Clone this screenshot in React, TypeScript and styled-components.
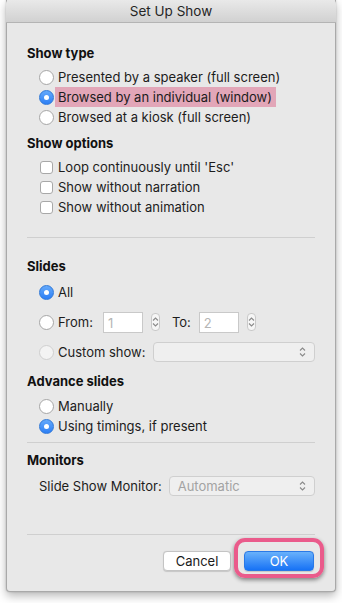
import React from 'react'
import styled, { createGlobalStyle } from 'styled-components'

const Global = createGlobalStyle`
  html, body {
    margin: 0;
    padding: 0;
    background: #ffffff;
  }
  body {
    font-family: Inter, "Liberation Sans", Arial, sans-serif;
    font-size: 13px;
    color: #1a1a1a;
  }
`

function Chevrons({ color = '#6e6e6e' }: { color?: string }) {
  return (
    <svg width="7" height="12" viewBox="0 0 7 12">
      <path d="M1 4.5 L3.5 2 L6 4.5" fill="none" stroke={color} strokeWidth="1.1" />
      <path d="M1 7.5 L3.5 10 L6 7.5" fill="none" stroke={color} strokeWidth="1.1" />
    </svg>
  )
}

function Radio({ on, disabled }: { on?: boolean; disabled?: boolean }) {
  return (
    <RadioDot $on={on} $disabled={disabled}>
      {on && <Pip />}
    </RadioDot>
  )
}

export default function App() {
  return (
    <Page>
      <Global />
      <Window>
        <TitleBar>Set Up Show</TitleBar>
        <Body>
          <Heading>Show type</Heading>
          <Group $gap={6}>
            <Row>
              <Radio />
              <Label>Presented by a speaker (full screen)</Label>
            </Row>
            <Row>
              <Radio on />
              <Label $highlight>Browsed by an individual (window)</Label>
            </Row>
            <Row>
              <Radio />
              <Label>Browsed at a kiosk (full screen)</Label>
            </Row>
          </Group>

          <Heading $top={8}>Show options</Heading>
          <Group $gap={6}>
            <Row>
              <Check />
              <Label>Loop continuously until 'Esc'</Label>
            </Row>
            <Row>
              <Check />
              <Label>Show without narration</Label>
            </Row>
            <Row>
              <Check />
              <Label>Show without animation</Label>
            </Row>
          </Group>

          <Rule $top={20} />

          <Heading $top={20}>Slides</Heading>
          <Group $gap={3}>
            <TallRow>
              <Radio on />
              <Label>All</Label>
            </TallRow>
            <TallRow>
              <Radio />
              <Label>From:</Label>
              <Field $left={10}>1</Field>
              <Stepper $left={8}>
                <Chevrons color="#8a8a8a" />
              </Stepper>
              <Label $left={12}>To:</Label>
              <Field $left={8}>2</Field>
              <Stepper $left={8}>
                <Chevrons color="#8a8a8a" />
              </Stepper>
            </TallRow>
            <TallRow>
              <Radio disabled />
              <Label>Custom show:</Label>
              <Popup $left={7} />
            </TallRow>
          </Group>

          <Heading $top={6}>Advance slides</Heading>
          <Group $gap={7}>
            <Row>
              <Radio />
              <Label>Manually</Label>
            </Row>
            <Row>
              <Radio on />
              <Label>Using timings, if present</Label>
            </Row>
          </Group>

          <Rule $top={6} />

          <Heading $top={9}>Monitors</Heading>
          <Group $gap={8}>
            <Row $indent={0}>
              <Label $plain>Slide Show Monitor:</Label>
              <Popup $left={7}>Automatic</Popup>
            </Row>
          </Group>

          <Rule $top={38} />

          <Buttons>
            <Button>Cancel</Button>
            <Focus>
              <Button $primary>OK</Button>
            </Focus>
          </Buttons>
        </Body>
      </Window>
    </Page>
  )
}

const Page = styled.div`
  width: 342px;
  height: 603px;
  padding-left: 6px;
  box-sizing: border-box;
`

const Window = styled.div`
  width: 330px;
  height: 592px;
  background: #e8e8e8;
  border: 1px solid #a9a9a9;
  border-top: none;
  border-radius: 0 0 4px 4px;
  box-sizing: border-box;
  box-shadow: 0 4px 10px rgba(0, 0, 0, 0.28), 0 0 2px rgba(0, 0, 0, 0.2);
  display: flex;
  flex-direction: column;
`

const TitleBar = styled.div`
  height: 22px;
  line-height: 22px;
  text-align: center;
  font-size: 13.5px;
  color: #262626;
  background: linear-gradient(#e9e9e9, #d1d1d1);
  border-bottom: 1px solid #b4b4b4;
  border-radius: 4px 4px 0 0;
  margin: 0 -1px;
`

const Body = styled.div`
  padding: 22px 20px 0 20px;
  display: flex;
  flex-direction: column;
`

const Heading = styled.div<{ $top?: number }>`
  font-weight: 700;
  font-size: 13px;
  line-height: 16px;
  color: #111;
  margin-top: ${p => p.$top ?? 0}px;
`

const Group = styled.div<{ $gap: number }>`
  display: flex;
  flex-direction: column;
  margin-top: ${p => p.$gap}px;
  padding-left: 13px;
`

const Row = styled.div<{ $indent?: number }>`
  display: flex;
  align-items: center;
  height: 20px;
  margin-left: ${p => (p.$indent ?? 0) - 1}px;
`

const TallRow = styled(Row)`
  height: 30px;
`

const Label = styled.span<{ $highlight?: boolean; $left?: number; $plain?: boolean }>`
  margin-left: ${p => p.$left ?? (p.$plain ? 0 : 4)}px;
  font-size: 13px;
  line-height: 20px;
  color: #1c1c1c;
  white-space: nowrap;
  ${p =>
    p.$highlight &&
    `
    background: #e2a6b8;
    padding: 0 4px 0 3px;
    margin-left: 1px;
  `}
`

const RadioDot = styled.span<{ $on?: boolean; $disabled?: boolean }>`
  width: 15px;
  height: 15px;
  border-radius: 50%;
  box-sizing: border-box;
  flex: none;
  display: flex;
  align-items: center;
  justify-content: center;
  background: ${p =>
    p.$on ? 'linear-gradient(#64a9fb, #2d7ff5)' : p.$disabled ? '#f3f3f3' : '#ffffff'};
  border: 1px solid ${p => (p.$on ? '#2f78d8' : p.$disabled ? '#cfcfcf' : '#a6a6a6')};
`

const Pip = styled.span`
  width: 5px;
  height: 5px;
  border-radius: 50%;
  background: #ffffff;
`

const Check = styled.span`
  width: 13px;
  height: 13px;
  margin-left: 1px;
  margin-right: 1px;
  box-sizing: border-box;
  flex: none;
  background: #ffffff;
  border: 1px solid #a8a8a8;
  border-radius: 3px;
`

const Field = styled.div<{ $left?: number }>`
  margin-left: ${p => p.$left ?? 0}px;
  width: 40px;
  height: 21px;
  box-sizing: border-box;
  background: #ffffff;
  border: 1px solid #c9c9c9;
  color: #b5b5b5;
  font-size: 13px;
  line-height: 21px;
  padding-left: 4px;
`

const Stepper = styled.div<{ $left?: number }>`
  margin-left: ${p => p.$left ?? 0}px;
  width: 9px;
  height: 18px;
  box-sizing: border-box;
  background: #f6f6f6;
  border: 1px solid #c9c9c9;
  border-radius: 4px;
  display: flex;
  align-items: center;
  justify-content: center;
`

const Popup = styled.div<{ $left?: number }>`
  margin-left: ${p => p.$left ?? 0}px;
  flex: 1;
  height: 20px;
  box-sizing: border-box;
  background: #efefef;
  border: 1px solid #cfcfcf;
  border-radius: 4px;
  color: #a3a3a3;
  font-size: 13px;
  line-height: 18px;
  padding: 0 8px;
  display: flex;
  align-items: center;
  justify-content: space-between;
  &::after {
    content: '';
    width: 7px;
    height: 12px;
    margin-left: auto;
    background: url("data:image/svg+xml,%3Csvg xmlns='http://www.w3.org/2000/svg' width='7' height='12'%3E%3Cpath d='M1 4.5 L3.5 2 L6 4.5 M1 7.5 L3.5 10 L6 7.5' fill='none' stroke='%238a8a8a' stroke-width='1.1'/%3E%3C/svg%3E");
  }
`

const Rule = styled.div<{ $top: number }>`
  height: 1px;
  background: #cfcfcf;
  margin-top: ${p => p.$top}px;
`

const Buttons = styled.div`
  display: flex;
  justify-content: flex-end;
  align-items: center;
  gap: 13px;
  margin-top: 16px;
  padding-right: 1px;
`

const Focus = styled.div`
  position: relative;
  &::before {
    content: '';
    position: absolute;
    left: -10px;
    right: -10px;
    top: -13px;
    bottom: -7px;
    border: 4px solid #ea5b8b;
    border-radius: 11px;
    box-shadow: 0 2px 4px rgba(0, 0, 0, 0.45);
    pointer-events: none;
  }
`

const Button = styled.button<{ $primary?: boolean }>`
  font-family: Inter, "Liberation Sans", Arial, sans-serif;
  font-size: 13px;
  height: 20px;
  width: ${p => (p.$primary ? 70 : 68)}px;
  padding: 0;
  border-radius: 4px;
  box-sizing: border-box;
  color: ${p => (p.$primary ? '#ffffff' : '#1a1a1a')};
  background: ${p => (p.$primary ? 'linear-gradient(#69b1fb, #1772f5)' : '#ffffff')};
  border: 1px solid ${p => (p.$primary ? '#2a79e6' : '#c4c4c4')};
  box-shadow: 0 0.5px 1px rgba(0, 0, 0, 0.15);
`
